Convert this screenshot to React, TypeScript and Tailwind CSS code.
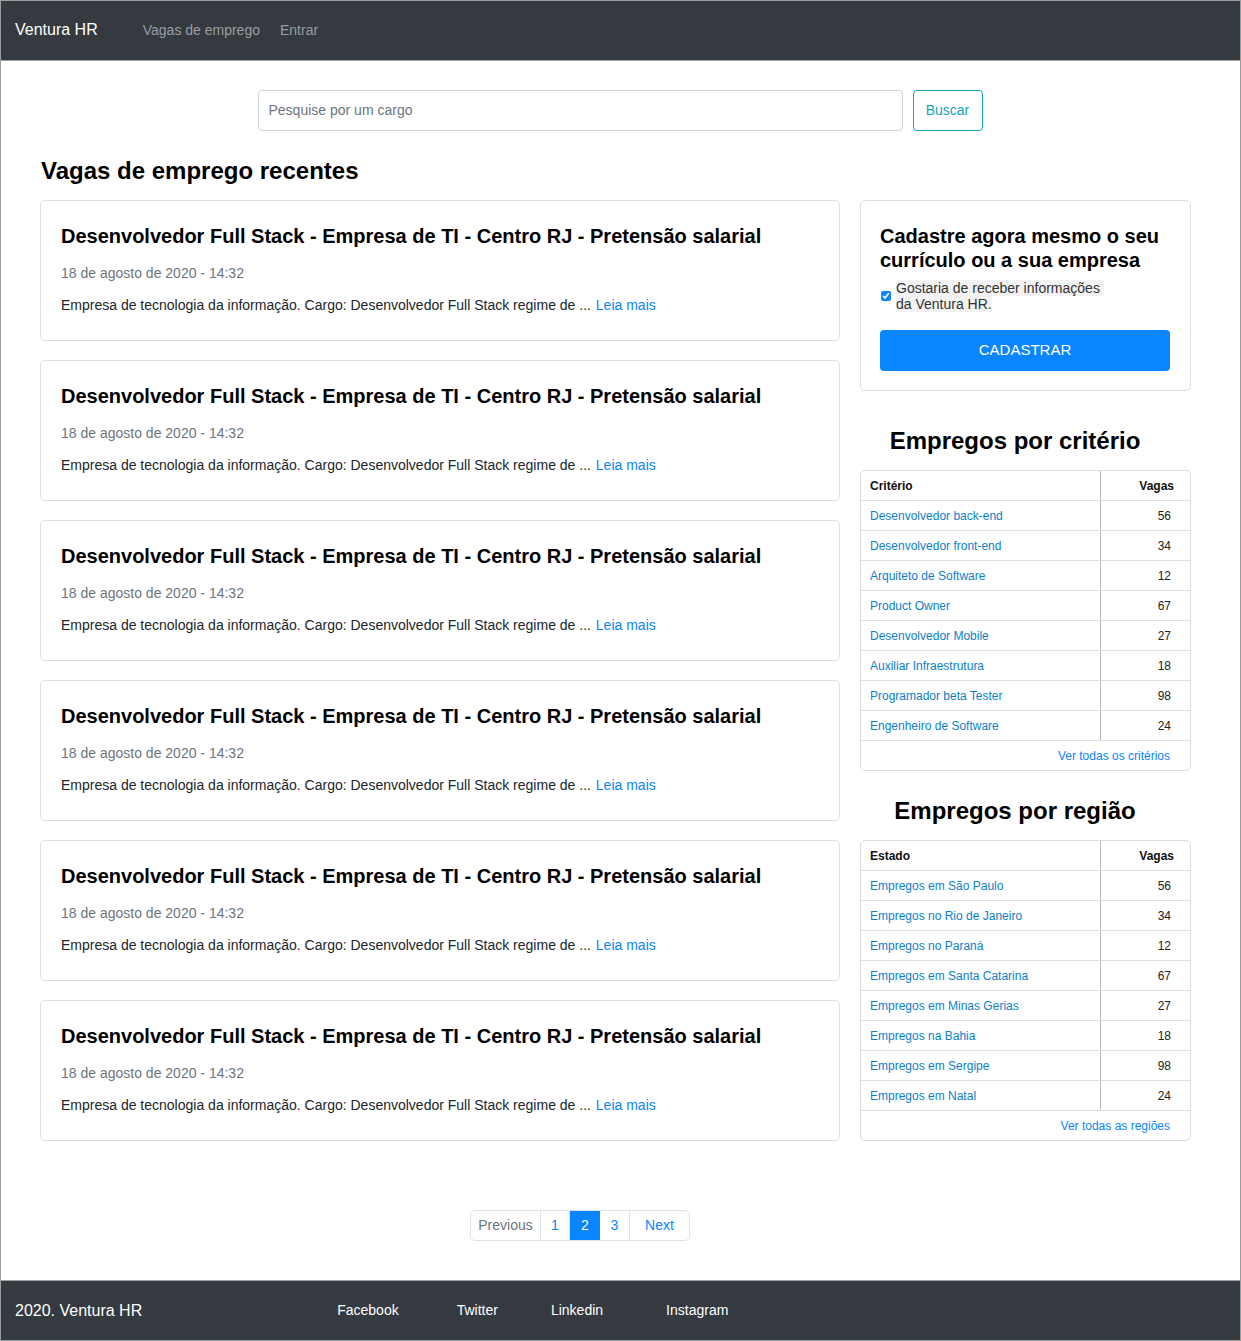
import React from "react";

const font = { fontFamily: '"Liberation Sans", Arial, Helvetica, sans-serif' };

const criterios: [string, number][] = [
  ["Desenvolvedor back-end", 56],
  ["Desenvolvedor front-end", 34],
  ["Arquiteto de Software", 12],
  ["Product Owner", 67],
  ["Desenvolvedor Mobile", 27],
  ["Auxiliar Infraestrutura", 18],
  ["Programador beta Tester", 98],
  ["Engenheiro de Software", 24],
];

const regioes: [string, number][] = [
  ["Empregos em São Paulo", 56],
  ["Empregos no Rio de Janeiro", 34],
  ["Empregos no Paraná", 12],
  ["Empregos em Santa Catarina", 67],
  ["Empregos em Minas Gerias", 27],
  ["Empregos na Bahia", 18],
  ["Empregos em Sergipe", 98],
  ["Empregos em Natal", 24],
];

function JobCard() {
  return (
    <div className="w-[800px] h-[141px] border border-[#dfdfdf] rounded-[5px] bg-white px-[20px] pt-[23px]">
      <h3 className="text-[20px] leading-[24px] font-bold text-black">
        Desenvolvedor Full Stack - Empresa de TI - Centro RJ - Pretensão salarial
      </h3>
      <div className="mt-[15px] text-[14px] leading-[20px] text-[#6c757d]">18 de agosto de 2020 - 14:32</div>
      <p className="mt-[12px] text-[14px] leading-[20px] text-[#212529]">
        Empresa de tecnologia da informação. Cargo: Desenvolvedor Full Stack regime de ...{" "}
        <a className="text-[#0a84ff] ml-[1px]">Leia mais</a>
      </p>
    </div>
  );
}

function DataTable({ head, rows, more }: { head: string; rows: [string, number][]; more: string }) {
  return (
    <div className="w-[331px] border border-[#dcdcdc] rounded-[5px] bg-white text-[12px]">
      <div className="grid grid-cols-[240px_1fr] h-[30px] border-b border-[#e0e0e0]">
        <div className="border-r border-[#b8b8b8] pl-[9px] flex items-center font-bold text-[#111]">{head}</div>
        <div className="flex items-center justify-end pr-[16px] font-bold text-[#111]">Vagas</div>
      </div>
      {rows.map(([name, n]) => (
        <div key={name} className="grid grid-cols-[240px_1fr] h-[30px] border-b border-[#e0e0e0]">
          <div className="border-r border-[#b8b8b8] pl-[9px] flex items-center text-[#0b80c8]">{name}</div>
          <div className="flex items-center justify-end pr-[19px] text-[#222]">{n}</div>
        </div>
      ))}
      <div className="h-[29px] flex items-center justify-end pr-[20px] text-[#0a84ff]">{more}</div>
    </div>
  );
}

export default function App() {
  return (
    <div style={font} className="w-[1241px] h-[1341px] border border-[#9c9c9c] flex flex-col bg-white">
      <nav className="h-[60px] shrink-0 bg-[#343a40] border-b border-[#a0a0a0] flex items-center pl-[14px] pb-[1px]">
        <span className="text-white text-[16px]">Ventura HR</span>
        <span className="ml-[45px] text-[14px] text-[#9a9da1]">Vagas de emprego</span>
        <span className="ml-[20px] text-[14px] text-[#9a9da1]">Entrar</span>
      </nav>

      <main className="flex-1 flex flex-col">
        <div className="mt-[29px] flex justify-center gap-[10px] pr-[1px]">
          <div className="w-[645px] h-[41px] border border-[#ced4da] rounded-[4px] flex items-center pl-[10px] text-[14px] text-[#6c757d]">
            Pesquise por um cargo
          </div>
          <div className="w-[70px] h-[41px] border border-[#17a2b8] rounded-[4px] flex items-center justify-center text-[14px] text-[#17a2b8]">
            Buscar
          </div>
        </div>

        <h1 className="mt-[26px] pl-[40px] text-[24px] leading-[28px] font-bold text-black">Vagas de emprego recentes</h1>

        <div className="mt-[15px] pl-[39px] flex gap-[20px]">
          <div className="flex flex-col gap-[19px]">
            {Array.from({ length: 6 }).map((_, i) => (
              <JobCard key={i} />
            ))}
          </div>

          <div className="w-[331px] flex flex-col">
            <div className="h-[191px] border border-[#dfdfdf] rounded-[5px] pl-[19px] pr-[20px] pt-[23px]">
              <h3 className="text-[20px] leading-[24px] font-bold text-black">
                Cadastre agora mesmo o seu
                <br />
                currículo ou a sua empresa
              </h3>
              <div className="mt-[8px] flex items-center">
                <input
                  type="checkbox"
                  defaultChecked
                  className="w-[10px] h-[10px] m-0 ml-[1px] accent-[#0a84ff]"
                />
                <span className="ml-[5px] text-[14px] leading-[16px] text-[#333]">
                  <span className="bg-[#f2f2f2]">Gostaria de receber informações&nbsp;</span>
                  <br />
                  <span className="bg-[#f2f2f2]">da Ventura HR.</span>
                </span>
              </div>
              <div className="mt-[18px] h-[41px] rounded-[4px] bg-[#0a84ff] flex items-center justify-center text-white text-[15px]">
                CADASTRAR
              </div>
            </div>

            <h2 className="mt-[36px] mb-[15px] pr-[21px] text-center text-[24px] leading-[28px] font-bold text-black">
              Empregos por critério
            </h2>
            <DataTable head="Critério" rows={criterios} more="Ver todas os critérios" />

            <h2 className="mt-[26px] mb-[15px] pr-[21px] text-center text-[24px] leading-[28px] font-bold text-black">
              Empregos por região
            </h2>
            <DataTable head="Estado" rows={regioes} more="Ver todas as regiões" />
          </div>
        </div>

        <div className="mt-[69px] pl-[469px] flex">
          <div className="flex h-[31px] border border-[#dee2e6] rounded-[5px] text-[14px] overflow-hidden">
            <div className="w-[70px] flex items-center justify-center text-[#6c757d] border-r border-[#dee2e6]">Previous</div>
            <div className="w-[29px] flex items-center justify-center text-[#0a84ff] border-r border-[#dee2e6]">1</div>
            <div className="w-[30px] flex items-center justify-center text-white bg-[#0a84ff]">2</div>
            <div className="w-[30px] flex items-center justify-center text-[#0a84ff] border-r border-[#dee2e6]">3</div>
            <div className="w-[59px] flex items-center justify-center text-[#0a84ff]">Next</div>
          </div>
        </div>
      </main>

      <footer className="h-[60px] shrink-0 bg-[#343a40] border-t border-[#a0a0a0] flex items-center pl-[14px] text-white">
        <span className="text-[16px]">2020. Ventura HR</span>
        <span className="ml-[195px] text-[14px]">Facebook</span>
        <span className="ml-[58px] text-[14px]">Twitter</span>
        <span className="ml-[53px] text-[14px]">Linkedin</span>
        <span className="ml-[63px] text-[14px]">Instagram</span>
      </footer>
    </div>
  );
}
